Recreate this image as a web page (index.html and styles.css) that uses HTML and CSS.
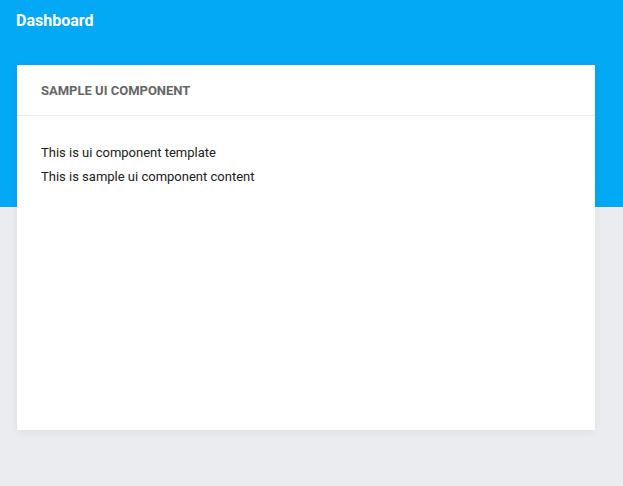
FILE: index.html
```html
<!DOCTYPE html>
<html>
<head>
<meta charset="utf-8">
<link rel="stylesheet" href="styles.css">
</head>
<body>
<header class="topbar">
  <h1 class="title">Dashboard</h1>
</header>
<main class="content">
  <section class="card">
    <div class="card-header">SAMPLE UI COMPONENT</div>
    <div class="card-body">
      <p>This is ui component template</p>
      <p>This is sample ui component content</p>
    </div>
  </section>
</main>
</body>
</html>
```
FILE: styles.css
```css
html, body {
  margin: 0;
  padding: 0;
}
body {
  font-family: Roboto, "Liberation Sans", sans-serif;
  background: linear-gradient(to bottom, #03a9f4 0, #03a9f4 207px, #ebecf0 207px, #ebecf0 100%);
  min-height: 486px;
}
.topbar {
  height: 65px;
  padding: 0 16px;
  box-sizing: border-box;
}
.title {
  margin: 0;
  padding-top: 11px;
  font-size: 16px;
  line-height: 20px;
  font-weight: 700;
  color: #fff;
}
.content {
  padding-left: 17px;
}
.card {
  width: 578px;
  height: 365px;
  background: #fff;
  box-shadow: 0 2px 8px rgba(0, 0, 0, 0.06);
}
.card-header {
  height: 51px;
  box-sizing: border-box;
  padding: 0 24px;
  display: flex;
  align-items: center;
  font-size: 13px;
  font-weight: 700;
  color: #666;
  border-bottom: 1px solid #ebecf0;
}
.card-body {
  padding: 25px 24px;
  font-size: 13px;
  line-height: 24px;
  color: #212121;
}
.card-body p {
  margin: 0;
}
```
